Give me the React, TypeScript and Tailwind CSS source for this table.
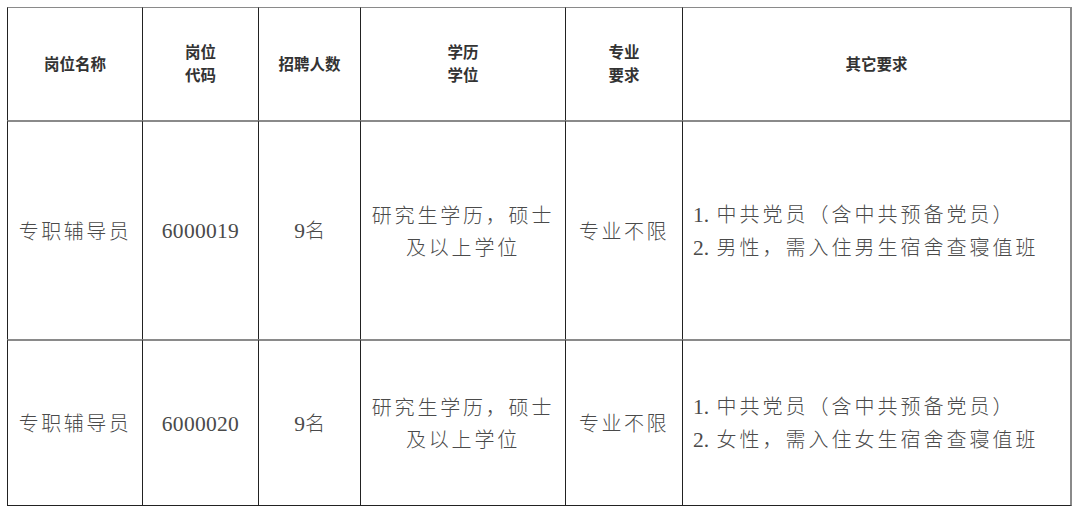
import React from 'react';

type Row = {
  name: string;
  code: string;
  count: string;
  degree: string[];
  major: string;
  other: string[];
};

const rows: Row[] = [
  {
    name: '专职辅导员',
    code: '6000019',
    count: '9',
    degree: ['研究生学历，硕士', '及以上学位'],
    major: '专业不限',
    other: ['中共党员（含中共预备党员）', '男性，需入住男生宿舍查寝值班'],
  },
  {
    name: '专职辅导员',
    code: '6000020',
    count: '9',
    degree: ['研究生学历，硕士', '及以上学位'],
    major: '专业不限',
    other: ['中共党员（含中共预备党员）', '女性，需入住女生宿舍查寝值班'],
  },
];

const headers: string[][] = [
  ['岗位名称'],
  ['岗位', '代码'],
  ['招聘人数'],
  ['学历', '学位'],
  ['专业', '要求'],
  ['其它要求'],
];

const widths = ['w-[135px]', 'w-[116px]', 'w-[102px]', 'w-[205px]', 'w-[117px]', 'w-[390px]'];

const sans = "font-['Noto_Sans_CJK_SC','Noto_Sans',sans-serif]";
const serifNum = "font-['Liberation_Serif','Noto_Sans_CJK_SC',serif]";

const App: React.FC = () => {
  return (
    <div className="min-h-screen bg-white pl-[7px] pt-[7px]">
      <table className="w-[1065px] table-fixed border-separate border-spacing-0">
        <colgroup>
          {widths.map((w, i) => (
            <col key={i} className={w} />
          ))}
        </colgroup>
        <thead>
          <tr className="h-[113px]">
            {headers.map((h, i) => (
              <th
                key={i}
                className={`border-t border-l border-t-[#8a8a8a] border-l-[#222] p-0 pb-[2px] text-center align-middle text-[15.5px] font-bold leading-[23px] text-[#333] ${sans} ${
                  i === headers.length - 1 ? 'border-r-2 border-r-[#8a8a8a]' : ''
                }`}
              >
                {h.map((line, j) => (
                  <div key={j}>{line}</div>
                ))}
              </th>
            ))}
          </tr>
        </thead>
        <tbody>
          {rows.map((r, ri) => {
            const last = ri === rows.length - 1;
            const base = `border-l border-t-2 border-l-[#222] border-t-[#8a8a8a] p-0 align-middle text-[20px] font-light leading-[32px] text-[#4a4a4a] ${sans} ${
              last ? 'border-b border-b-[#222]' : ''
            }`;
            return (
              <tr key={ri} className={last ? 'h-[167px]' : 'h-[219px]'}>
                <td className={`${base} text-center tracking-[2.5px]`}>{r.name}</td>
                <td className={`${base} text-center`}>
                  <span className={`${serifNum} text-[21.5px] font-normal tracking-[0.3px]`}>{r.code}</span>
                </td>
                <td className={`${base} text-center`}>
                  <span className={`${serifNum} text-[21.5px] font-normal`}>{r.count}</span>
                  <span>名</span>
                </td>
                <td className={`${base} text-center tracking-[2.8px]`}>
                  {r.degree.map((d, j) => (
                    <div key={j}>{d}</div>
                  ))}
                </td>
                <td className={`${base} text-center tracking-[2.5px]`}>{r.major}</td>
                <td className={`${base} border-r-2 border-r-[#8a8a8a] pl-[10px] text-left tracking-[3px]`}>
                  {r.other.map((o, j) => (
                    <div key={j}>
                      <span className={`${serifNum} text-[21.5px] font-normal tracking-normal`}>{j + 1}.</span>{' '}
                      {o}
                    </div>
                  ))}
                </td>
              </tr>
            );
          })}
        </tbody>
      </table>
    </div>
  );
};

export default App;
